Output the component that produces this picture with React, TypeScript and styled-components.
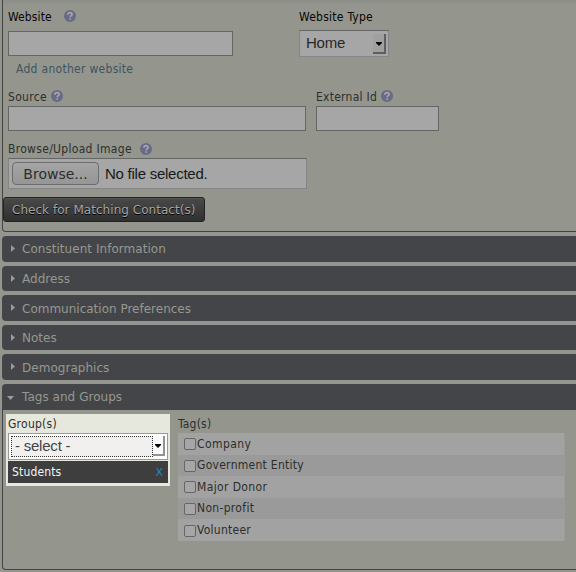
import React from "react";
import styled, { createGlobalStyle } from "styled-components";

const Global = createGlobalStyle`
  * { box-sizing: border-box; }
  body { margin: 0; background: #94958e; overflow: hidden; }
`;
const Page = styled.div`
  width: 576px;
  height: 572px;
  overflow: hidden;
  padding-left: 2px;
  font-family: "DejaVu Sans", sans-serif;
  font-size: 12px;
  color: #2c2e2c;
`;
const Panel = styled.section<{ $h: number }>`
  height: ${(p) => p.$h}px;
  border-left: 1px solid #444442;
  border-bottom: 1px solid #444442;
  border-bottom-left-radius: 4px;
  background: #94968e;
`;
const ContactPanel = styled(Panel)`
  margin-bottom: 4px;
  background: linear-gradient(#8b8d87, #94968e 6px);
`;
const Fields = styled.div`
  padding-left: 5px;
`;
const Row = styled.div<{ $h: number; $gap?: number }>`
  display: flex;
  height: ${(p) => p.$h}px;
  gap: ${(p) => p.$gap ?? 0}px;
`;
const Field = styled.div<{ $w: number; $top: number }>`
  width: ${(p) => p.$w}px;
  padding-top: ${(p) => p.$top}px;
`;
const Label = styled.div<{ $h: number; $gap: number; $dark?: boolean; $line?: number }>`
  display: flex;
  align-items: flex-start;
  height: ${(p) => p.$h}px;
  gap: ${(p) => p.$gap}px;
  line-height: ${(p) => p.$line ?? 15}px;
  white-space: nowrap;
  color: ${(p) => (p.$dark ? "#060606" : "#2c2e2c")};
`;
const Text = styled.span<{ $s?: number; $narrow?: boolean }>`
  font-family: ${(p) => (p.$narrow ? '"DejaVu Sans Condensed", ' : "")}"DejaVu Sans", sans-serif;
  font-stretch: ${(p) => (p.$narrow ? "condensed" : "normal")};
  letter-spacing: ${(p) => p.$s ?? 0}px;
  white-space: nowrap;
`;
const HelpSvg = styled.svg`
  display: block;
  width: 12px;
  height: 12px;
  margin-top: 1px;
`;
const Input = styled.input`
  display: block;
  width: 100%;
  height: 25px;
  margin: 0;
  border: 1px solid #656565;
  border-radius: 0;
  background: #a6a6a6;
`;
const AddLink = styled.a`
  display: block;
  padding: 6px 0 0 8px;
  line-height: 15px;
  color: #3e5361;
`;
const Select = styled.div<{ $lit?: boolean }>`
  display: flex;
  width: 100%;
  height: 27px;
  padding: ${(p) => (p.$lit ? "2px" : "3px 2px")};
  border: 1px solid ${(p) => (p.$lit ? "#999" : "#858588")};
  border-top-color: ${(p) => (p.$lit ? "#999" : "#656565")};
  background: ${(p) => (p.$lit ? "#fff" : "#a6a6a6")};
  color: ${(p) => (p.$lit ? "#444" : "#262826")};
  font: 15px/17px "Liberation Sans", sans-serif;
  letter-spacing: -0.22px;
`;
const Value = styled.span<{ $lit?: boolean }>`
  flex: 1;
  padding-left: ${(p) => (p.$lit ? 3 : 4)}px;
  ${(p) => p.$lit && "border: 1px dotted #333; background: #f1f0ef;"}
`;
const Arrow = styled.span<{ $lit?: boolean }>`
  display: flex;
  align-items: center;
  justify-content: center;
  width: ${(p) => (p.$lit ? 12 : 13)}px;
  height: 20px;
  border-right: 2px solid ${(p) => (p.$lit ? "#929292" : "#5e5e5e")};
  border-bottom: 2px solid ${(p) => (p.$lit ? "#929292" : "#5e5e5e")};
  background: ${(p) => (p.$lit ? "#fbfbfb" : "#a0a09e")};
`;
const ArrowSvg = styled.svg`
  width: 6px;
  height: 4px;
  margin-top: 1px;
`;
const FileBox = styled.div`
  display: flex;
  height: 31px;
  padding: 3px;
  gap: 6px;
  border: 1px solid #858588;
  border-top-color: #656565;
  background: #a6a6a6;
  font: 15px/23px "Liberation Sans", sans-serif;
  letter-spacing: -0.25px;
  color: #181a18;
`;
const BrowseButton = styled.button`
  width: 87px;
  height: 23px;
  padding: 0;
  border: 1px solid #6c6c6c;
  border-radius: 4px;
  background: linear-gradient(#a4a4a4, #969696);
  color: #2c2e2c;
  font: 14px/20px "DejaVu Sans", sans-serif;
`;
const CheckButton = styled.button`
  display: block;
  width: 202px;
  height: 25px;
  padding: 0 0 0 8px;
  border: 1px solid #222;
  border-radius: 3px;
  background: linear-gradient(#494949, #303030);
  box-shadow: inset 0 1px 0 #555;
  color: #a2a4a2;
  text-align: left;
  text-shadow: 0 1px 0 #000;
  font: 12px/22px "DejaVu Sans", sans-serif;
`;
const Header = styled.div<{ $h: number; $gap: number; $top: number; $open?: boolean }>`
  display: flex;
  align-items: flex-start;
  height: ${(p) => p.$h}px;
  margin-bottom: ${(p) => p.$gap}px;
  padding-left: 8px;
  gap: 7px;
  border-radius: ${(p) => (p.$open ? "4px 0 0 0" : "4px 0 0 4px")};
  background: #444549;
  color: #96988f;
  line-height: 14px;
  > span { margin-top: ${(p) => p.$top}px; }
`;
const Marker = styled.svg<{ $open?: boolean }>`
  width: ${(p) => (p.$open ? 7 : 4)}px;
  height: ${(p) => (p.$open ? 4 : 7)}px;
  margin-top: ${(p) => (p.$open ? 12 : 9)}px;
  margin-left: ${(p) => (p.$open ? -3 : 1)}px;
  margin-right: ${(p) => (p.$open ? 1 : 0)}px;
`;
const Groups = styled.div`
  width: 164px;
  height: 72px;
  margin: 4px 8px 0 3px;
  padding: 2px;
  background: #e7e8dd;
`;
const Student = styled.div`
  display: flex;
  justify-content: space-between;
  height: 22px;
  margin-top: 1px;
  padding: 0 5px 0 4px;
  background: #3e3e3e;
  color: #f4f4f4;
  line-height: 22px;
`;
const Remove = styled.span`
  color: #2786c2;
  font: 11px/23px "DejaVu Sans", sans-serif;
`;
const Tags = styled.div`
  width: 387px;
  padding-top: 6px;
`;
const TagRow = styled.label<{ $odd: boolean }>`
  display: flex;
  height: ${(p) => (p.$odd ? 22 : 21)}px;
  padding-left: 6px;
  gap: 1px;
  line-height: ${(p) => (p.$odd ? 23 : 21)}px;
  background: #9a9a9a;
  ${(p) => p.$odd && "background: linear-gradient(90deg, #a2a2a2 386px, #9a9a9a 386px);"}
`;
const Check = styled.input`
  appearance: none;
  width: 12px;
  height: 12px;
  margin: 5px 0 0;
  border: 1px solid #666;
  border-radius: 2px;
  background: #a6a6a6;
  label:last-child > & { margin-top: 6px; }
`;

const Help = () => (
  <HelpSvg viewBox="0 0 12 12">
    <circle cx="6" cy="6" r="6" fill="#696a87" />
    <path d="M3.9 4.7C4 3.2 4.8 2.7 6 2.7s2.1.6 2.1 1.7C8.1 5.7 6.2 5.6 6.2 7.2" fill="none" stroke="#a5a7a8" strokeWidth="1.7" />
    <path d="M5.3 8.2H7v1.6H5.3z" fill="#a5a7a8" />
  </HelpSvg>
);
const DropArrow = ({ lit }: { lit?: boolean }) => (
  <Arrow $lit={lit}>
    <ArrowSvg viewBox="0 0 6 4"><path d="M0 0h6v1L3 4L0 1z" fill="#000" /></ArrowSvg>
  </Arrow>
);

const sections = [
  { name: "Constituent Information", h: 26, top: 6, s: 0.04 },
  { name: "Address", h: 25, top: 6, s: 0.03 },
  { name: "Communication Preferences", h: 26, top: 7, s: 0 },
  { name: "Notes", h: 25, top: 6, s: 0 },
  { name: "Demographics", h: 26, top: 7, s: 0.03 },
];
const tags = [
  { name: "Company", s: 0.42 },
  { name: "Government Entity", s: 0.28 },
  { name: "Major Donor", s: 0.38 },
  { name: "Non-profit", s: 0.32 },
  { name: "Volunteer", s: 0.26 },
];

export default function App() {
  return (
    <Page>
      <Global />
      <ContactPanel $h={232}>
        <Fields>
          <Row $h={88} $gap={66}>
            <Field $w={225} $top={9}>
              <Label $h={22} $gap={12} $line={16} $dark><Text $narrow $s={0.12}>Website</Text><Help /></Label>
              <Input />
              <AddLink><Text $narrow $s={0.29}>Add another website</Text></AddLink>
            </Field>
            <Field $w={90} $top={9}>
              <Label $h={21} $gap={0} $line={16} $dark><Text $narrow $s={0.25}>Website Type</Text></Label>
              <Select><Value>Home</Value><DropArrow /></Select>
            </Field>
          </Row>
          <Row $h={54} $gap={10}>
            <Field $w={298} $top={1}>
              <Label $h={17} $gap={4} $line={17}><Text $narrow $s={0.3}>Source</Text><Help /></Label>
              <Input />
            </Field>
            <Field $w={123} $top={1}>
              <Label $h={17} $gap={4} $line={17}><Text $narrow $s={0.25}>External Id</Text><Help /></Label>
              <Input />
            </Field>
          </Row>
          <Row $h={55}>
            <Field $w={299} $top={0}>
              <Label $h={16} $gap={8}><Text $narrow $s={0.31}>Browse/Upload Image</Text><Help /></Label>
              <FileBox><BrowseButton>Browse...</BrowseButton><span>No file selected.</span></FileBox>
            </Field>
          </Row>
        </Fields>
        <CheckButton><Text $s={0.04}>Check for Matching Contact(s)</Text></CheckButton>
      </ContactPanel>
      {sections.map((s) => (
        <Header key={s.name} $h={s.h} $gap={4} $top={s.top}>
          <Marker viewBox="0 0 4 7"><path d="M0 0L4 3.5L0 7z" fill="#999b96" /></Marker>
          <Text $s={s.s}>{s.name}</Text>
        </Header>
      ))}
      <Header $h={26} $gap={0} $top={6} $open>
        <Marker $open viewBox="0 0 7 4"><path d="M0 0h7L3.5 4z" fill="#999b96" /></Marker>
        <Text $s={0.04}>Tags and Groups</Text>
      </Header>
      <Panel $h={160}>
        <Row $h={150}>
          <Groups>
            <Label $h={17} $gap={0} $line={16}><Text $narrow $s={0.25}>Group(s)</Text></Label>
            <Select $lit><Value $lit>- select -</Value><DropArrow lit /></Select>
            <Student><Text $narrow $s={0.15}>Students</Text><Remove>X</Remove></Student>
          </Groups>
          <Tags>
            <Label $h={17} $gap={0} $line={16}><Text $narrow $s={0.2}>Tag(s)</Text></Label>
            {tags.map((t, i) => (
              <TagRow key={t.name} $odd={i % 2 === 0}>
                <Check type="checkbox" />
                <Text $narrow $s={t.s}>{t.name}</Text>
              </TagRow>
            ))}
          </Tags>
        </Row>
      </Panel>
    </Page>
  );
}
